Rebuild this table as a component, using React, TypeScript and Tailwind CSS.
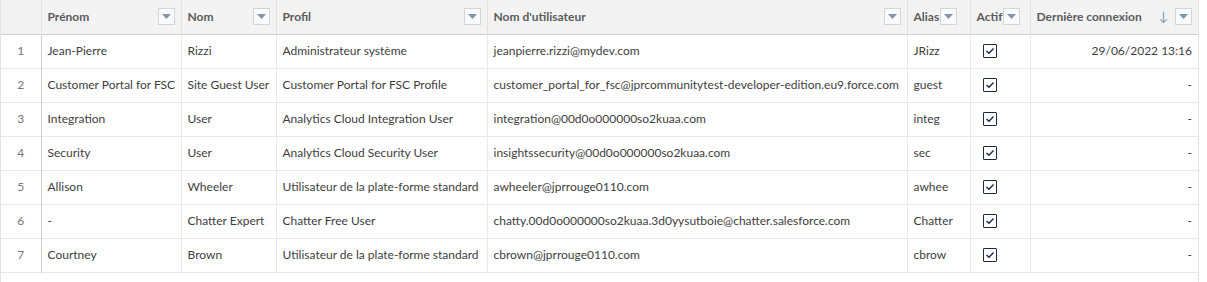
import React from 'react'

type Row = {
  prenom: string
  nom: string
  profil: string
  user: string
  alias: string
  date: string
}

const rows: Row[] = [
  { prenom: 'Jean-Pierre', nom: 'Rizzi', profil: 'Administrateur système', user: 'jeanpierre.rizzi@mydev.com', alias: 'JRizz', date: '29/06/2022 13:16' },
  { prenom: 'Customer Portal for FSC', nom: 'Site Guest User', profil: 'Customer Portal for FSC Profile', user: 'customer_portal_for_fsc@jprcommunitytest-developer-edition.eu9.force.com', alias: 'guest', date: '-' },
  { prenom: 'Integration', nom: 'User', profil: 'Analytics Cloud Integration User', user: 'integration@00d0o000000so2kuaa.com', alias: 'integ', date: '-' },
  { prenom: 'Security', nom: 'User', profil: 'Analytics Cloud Security User', user: 'insightssecurity@00d0o000000so2kuaa.com', alias: 'sec', date: '-' },
  { prenom: 'Allison', nom: 'Wheeler', profil: 'Utilisateur de la plate-forme standard', user: 'awheeler@jprrouge0110.com', alias: 'awhee', date: '-' },
  { prenom: '-', nom: 'Chatter Expert', profil: 'Chatter Free User', user: 'chatty.00d0o000000so2kuaa.3d0yysutboie@chatter.salesforce.com', alias: 'Chatter', date: '-' },
  { prenom: 'Courtney', nom: 'Brown', profil: 'Utilisateur de la plate-forme standard', user: 'cbrown@jprrouge0110.com', alias: 'cbrow', date: '-' },
]

function FilterButton() {
  return (
    <span className="flex h-[17px] w-[17px] shrink-0 items-center justify-center border border-[#d4d4d4] bg-[#fafafa]">
      <svg width="9" height="5" viewBox="0 0 9 5">
        <path d="M0 0 H9 L4.5 5 Z" fill="#8295ad" />
      </svg>
    </span>
  )
}

function Checkbox() {
  return (
    <span className="flex h-[14px] w-[14px] items-center justify-center border-[1.5px] border-[#1b2a47] rounded-[1px] bg-white">
      <svg width="10" height="8" viewBox="0 0 10 8">
        <path d="M1.5 4 L4 6.3 L8.5 1.5" fill="none" stroke="#1b2a47" strokeWidth="1.4" />
      </svg>
    </span>
  )
}

function Header({ label, tight, sort }: { label: string; tight?: boolean; sort?: boolean }) {
  return (
    <th className="h-[34px] border-r border-[#e2e2e2] px-[6px] text-left font-bold text-[#5c5c5c]">
      <div className={`flex items-center ${tight ? 'gap-[1px]' : 'justify-between'}`}>
        <span className="whitespace-nowrap">{label}</span>
        {sort ? (
          <span className="flex items-center gap-[6px]">
            <span className="text-[13px] font-normal text-[#7f99b8]">↓</span>
            <FilterButton />
          </span>
        ) : (
          <FilterButton />
        )}
      </div>
    </th>
  )
}

export default function App() {
  return (
    <div className="h-[282px] w-[1207px] bg-white font-['Segoe_UI','Lato',sans-serif] text-[12px] text-[#3e3e3e]">
      <div className="h-[282px] w-[1199px] border-x border-[#e2e2e2]">
        <table className="w-[1197px] table-fixed border-collapse">
          <colgroup>
            <col className="w-[40px]" />
            <col className="w-[140px]" />
            <col className="w-[95px]" />
            <col className="w-[211px]" />
            <col className="w-[420px]" />
            <col className="w-[63px]" />
            <col className="w-[60px]" />
            <col className="w-[168px]" />
          </colgroup>
          <thead>
            <tr className="border-b border-[#c9d1db] bg-[#f3f3f3]">
              <th className="border-r border-[#e2e2e2]" />
              <Header label="Prénom" />
              <Header label="Nom" />
              <Header label="Profil" />
              <Header label="Nom d'utilisateur" />
              <Header label="Alias" tight />
              <Header label="Actif" tight />
              <Header label="Dernière connexion" sort />
            </tr>
          </thead>
          <tbody>
            {rows.map((r, i) => (
              <tr key={i} className="h-[34px] border-b border-[#e6e9ee]">
                <td className="border-r border-[#d0d0d0] text-center text-[#777]">{i + 1}</td>
                <td className="border-r border-[#e6e9ee] px-[6px] whitespace-nowrap">{r.prenom}</td>
                <td className="border-r border-[#e6e9ee] px-[6px] whitespace-nowrap">{r.nom}</td>
                <td className="border-r border-[#e6e9ee] px-[6px] whitespace-nowrap">{r.profil}</td>
                <td className="border-r border-[#e6e9ee] px-[6px] whitespace-nowrap overflow-hidden">{r.user}</td>
                <td className="border-r border-[#e6e9ee] px-[6px] whitespace-nowrap">{r.alias}</td>
                <td className="border-r border-[#e6e9ee] pl-[12px]">
                  <Checkbox />
                </td>
                <td className="px-[6px] text-right whitespace-nowrap">{r.date}</td>
              </tr>
            ))}
          </tbody>
        </table>
      </div>
    </div>
  )
}
